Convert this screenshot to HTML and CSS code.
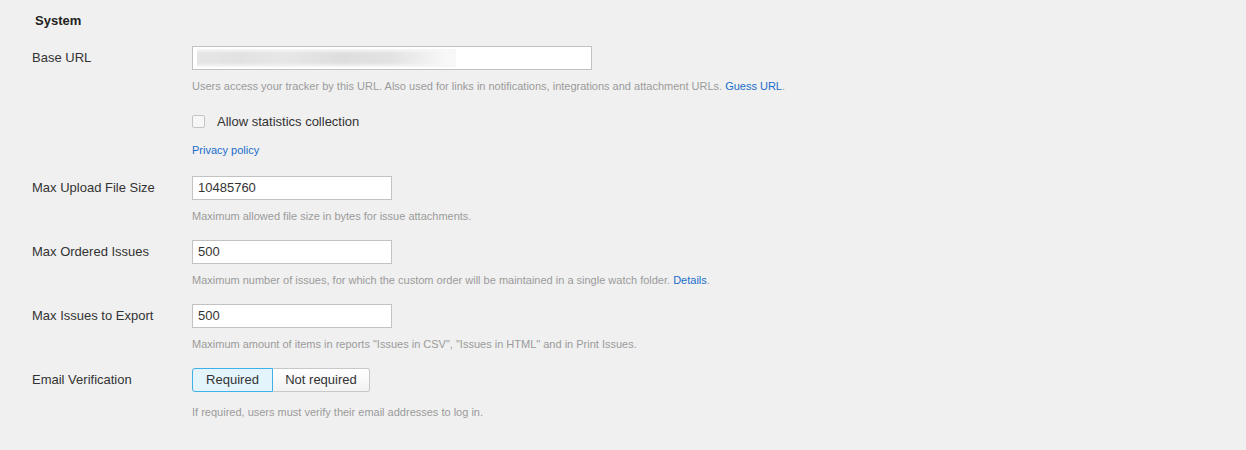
FILE: index.html
```html
<!DOCTYPE html>
<html>
<head>
<meta charset="utf-8">
<link rel="stylesheet" href="styles.css">
</head>
<body>
<div class="page">
  <div class="title">System</div>

  <div class="field first">
    <div class="label">Base URL</div>
    <div class="control">
      <div class="input wide"><span class="blurred"><span class="blur-inner"></span></span></div>
      <div class="hint">Users access your tracker by this URL. Also used for links in notifications, integrations and attachment URLs. <a class="link">Guess URL</a>.</div>
      <label class="check"><span class="box"></span><span>Allow statistics collection</span></label>
      <div class="privacy"><a class="link">Privacy policy</a></div>
    </div>
  </div>

  <div class="field">
    <div class="label">Max Upload File Size</div>
    <div class="control">
      <div class="input">10485760</div>
      <div class="hint">Maximum allowed file size in bytes for issue attachments.</div>
    </div>
  </div>

  <div class="field">
    <div class="label">Max Ordered Issues</div>
    <div class="control">
      <div class="input">500</div>
      <div class="hint">Maximum number of issues, for which the custom order will be maintained in a single watch folder. <a class="link">Details</a>.</div>
    </div>
  </div>

  <div class="field">
    <div class="label">Max Issues to Export</div>
    <div class="control">
      <div class="input">500</div>
      <div class="hint">Maximum amount of items in reports "Issues in CSV", "Issues in HTML" and in Print Issues.</div>
    </div>
  </div>

  <div class="field">
    <div class="label">Email Verification</div>
    <div class="control">
      <div class="seg">
        <span class="btn btn-on">Required</span><span class="btn btn-off">Not required</span>
      </div>
      <div class="hint hint-seg">If required, users must verify their email addresses to log in.</div>
    </div>
  </div>
</div>
</body>
</html>
```

FILE: styles.css
```css
html, body {
  margin: 0;
  padding: 0;
  background: #f0f0f0;
}
body {
  font-family: "Liberation Sans", Arial, sans-serif;
  font-size: 13px;
  color: #333;
  width: 1246px;
  height: 450px;
  overflow: hidden;
}
.page {
  padding: 13px 0 0 32px;
}
.title {
  font-weight: bold;
  font-size: 13px;
  line-height: 16px;
  padding-left: 3px;
  color: #222;
  margin-bottom: 17px;
}
.field {
  display: grid;
  grid-template-columns: 160px 1fr;
  margin-bottom: 16px;
}
.field.first {
  margin-bottom: 18px;
}
.label {
  line-height: 24px;
  color: #333;
}
.control {
  display: flex;
  flex-direction: column;
  align-items: flex-start;
}
.input {
  box-sizing: border-box;
  width: 200px;
  height: 24px;
  border: 1px solid #c2c2c2;
  background: #fff;
  padding: 0 5px;
  line-height: 22px;
  color: #333;
}
.input.wide {
  width: 400px;
  display: flex;
  align-items: center;
  padding: 0 4px;
  overflow: hidden;
}
.blurred {
  display: block;
  width: 259px;
  height: 18px;
  background: #f6f6f6;
  overflow: hidden;
  position: relative;
}
.blur-inner {
  display: block;
  height: 100%;
  background: linear-gradient(to right, #e6e6e6 0%, #e2e2e2 20%, #e7e7e7 35%, #dedede 55%, #e2e2e2 72%, #eeeeee 83%, #f8f8f8 92%, #f7f7f7 100%);
  filter: blur(2px);
  transform: scale(1.1, 0.75);
}
.hint {
  font-size: 11px;
  line-height: 16px;
  color: #9b9b9b;
  margin-top: 8px;
}
.hint-seg {
  margin-top: 12px;
}
.link {
  color: #1a6dcc;
  cursor: pointer;
}
.check {
  display: flex;
  align-items: center;
  height: 24px;
  margin-top: 15px;
  color: #333;
}
.box {
  box-sizing: border-box;
  width: 13px;
  height: 13px;
  border: 1px solid #c4c4c4;
  border-radius: 2px;
  background: #f6f6f6;
  margin-right: 12px;
}
.privacy {
  font-size: 11px;
  line-height: 16px;
  margin-top: 9px;
}
.seg {
  display: flex;
  height: 24px;
}
.btn {
  box-sizing: border-box;
  height: 24px;
  line-height: 22px;
  text-align: center;
  color: #333;
}
.btn-on {
  width: 81px;
  border: 1px solid #3fb0ea;
  border-radius: 3px 0 0 3px;
  background: #e3f4fd;
}
.btn-off {
  width: 97px;
  border: 1px solid #c8c8c8;
  border-left: none;
  border-radius: 0 3px 3px 0;
  background: linear-gradient(#ffffff, #f2f2f2);
}
```
